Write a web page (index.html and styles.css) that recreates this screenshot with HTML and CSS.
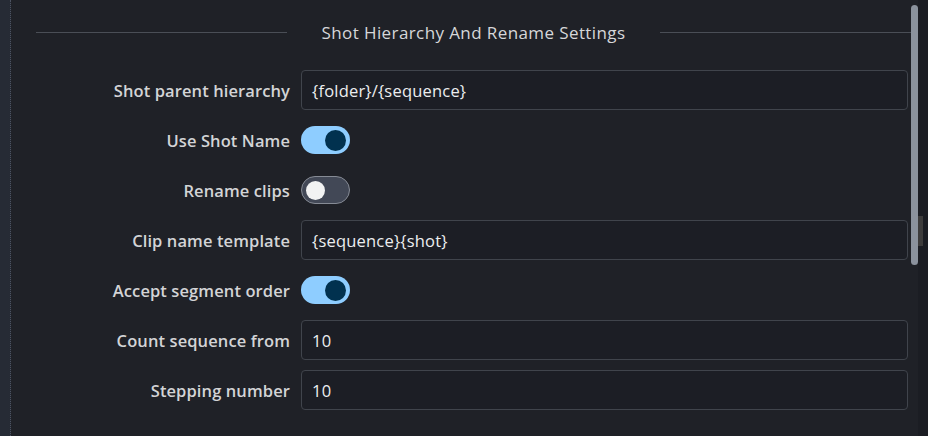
FILE: index.html
```html
<!DOCTYPE html>
<html>
<head>
<meta charset="utf-8">
<link rel="stylesheet" href="styles.css">
</head>
<body>
<div class="app">
  <div class="side-strip"></div>
  <main class="panel">
    <div class="section-head">
      <span class="rule"></span>
      <span class="section-title">Shot Hierarchy And Rename Settings</span>
      <span class="rule"></span>
    </div>
    <div class="form">
      <label class="label">Shot parent hierarchy</label>
      <div class="field"><div class="input">{folder}/{sequence}</div></div>

      <label class="label">Use Shot Name</label>
      <div class="field"><span class="toggle on"><span class="knob"></span></span></div>

      <label class="label">Rename clips</label>
      <div class="field"><span class="toggle off"><span class="knob"></span></span></div>

      <label class="label">Clip name template</label>
      <div class="field"><div class="input">{sequence}{shot}</div></div>

      <label class="label">Accept segment order</label>
      <div class="field"><span class="toggle on"><span class="knob"></span></span></div>

      <label class="label">Count sequence from</label>
      <div class="field"><div class="input">10</div></div>

      <label class="label">Stepping number</label>
      <div class="field"><div class="input">10</div></div>
    </div>
  </main>
  <div class="scroll-track"><div class="scroll-thumb"></div></div>
  <div class="outer-strip"><div class="outer-mark"></div></div>
</div>
</body>
</html>
```

FILE: styles.css
```css
html, body {
  margin: 0;
  padding: 0;
  background: #1f2127;
  font-family: "Open Sans", "Noto Sans", sans-serif;
}
.app {
  display: flex;
  width: 928px;
  height: 436px;
  overflow: hidden;
}
.side-strip {
  width: 10px;
  background: #262b35;
  border-right: 1px dotted #4c5260;
  flex: none;
}
.panel {
  flex: 1;
  padding: 0 0 0 25px;
  min-width: 0;
}
.section-head {
  display: flex;
  align-items: center;
  height: 32px;
  padding-top: 16px;
  margin-right: -3px;
  gap: 35px;
}
.rule {
  flex: 1;
  height: 1px;
  background: #4a4e56;
}
.section-title {
  color: #d6d7d9;
  font-size: 17px;
  font-weight: 500;
  letter-spacing: 0.4px;
  white-space: nowrap;
}
.form {
  display: grid;
  grid-template-columns: 254px 1fr;
  column-gap: 11px;
  row-gap: 10px;
  margin-top: 22px;
}
.label {
  display: flex;
  align-items: center;
  justify-content: flex-end;
  height: 40px;
  color: #d3d4d6;
  font-size: 16.5px;
  font-weight: 600;
  letter-spacing: 0.1px;
  white-space: nowrap;
}
.field {
  display: flex;
  align-items: center;
  height: 40px;
}
.input {
  box-sizing: border-box;
  width: 100%;
  height: 40px;
  border: 1px solid #40444c;
  border-radius: 4px;
  background: #1c1e25;
  color: #eceef0;
  font-size: 16.5px;
  letter-spacing: 0.2px;
  padding: 0 10px;
  display: flex;
  align-items: center;
}
.toggle {
  box-sizing: border-box;
  width: 49px;
  height: 28px;
  border-radius: 14px;
  display: flex;
  align-items: center;
  padding: 0 4px;
}
.toggle.on {
  background: #8ecdff;
  justify-content: flex-end;
}
.toggle.on .knob {
  width: 21px;
  height: 21px;
  border-radius: 50%;
  background: #01314f;
}
.toggle.off {
  background: #424856;
  border: 1px solid #868b95;
  justify-content: flex-start;
}
.toggle.off .knob {
  width: 19px;
  height: 19px;
  border-radius: 50%;
  background: #f2f3f3;
}
.scroll-track {
  width: 7px;
  flex: none;
  margin-left: 3px;
  padding-top: 5px;
}
.scroll-thumb {
  height: 260px;
  background: #8b929d;
  border-radius: 4px;
}
.outer-strip {
  width: 10px;
  flex: none;
  background: #1b1d23;
  display: flex;
  flex-direction: column;
  padding-top: 216px;
  box-sizing: border-box;
}
.outer-mark {
  width: 5px;
  height: 30px;
  background: #3d3c3c;
}
```
